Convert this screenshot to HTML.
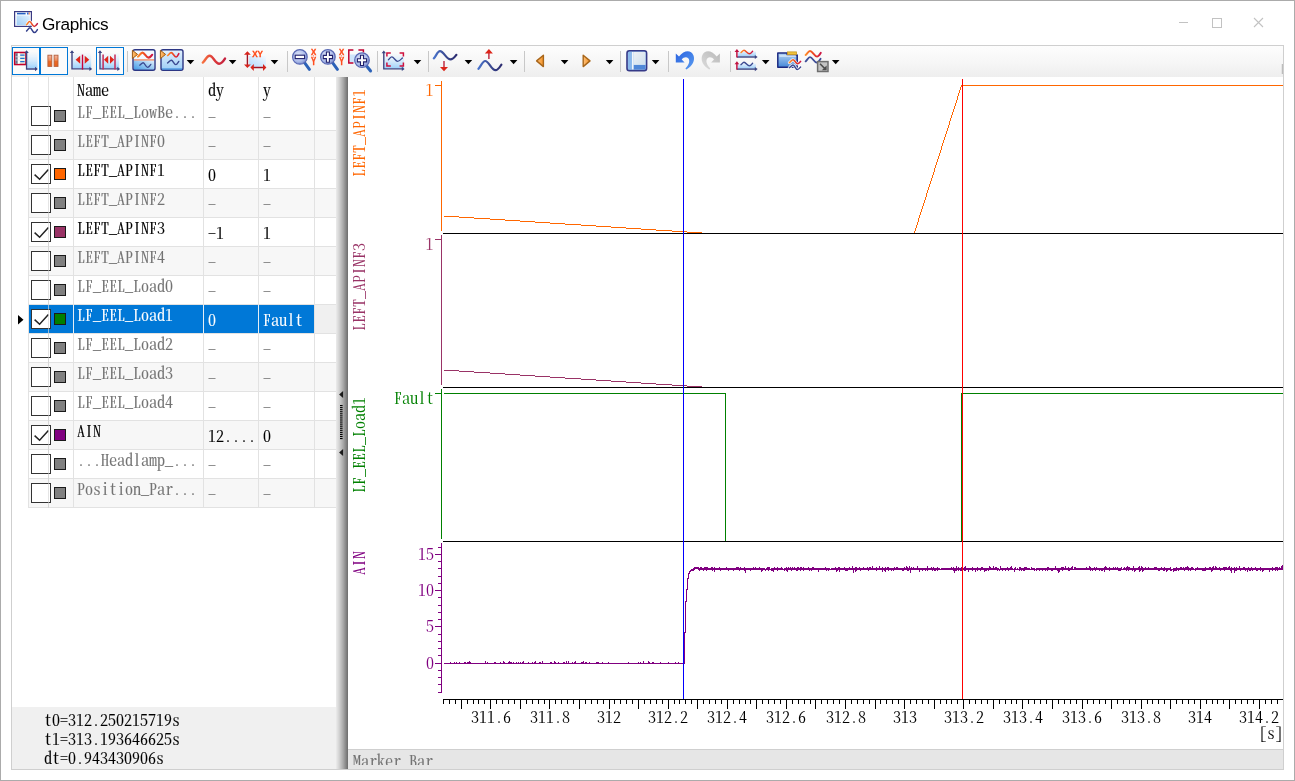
<!DOCTYPE html>
<html lang="en"><head><meta charset="utf-8"><title>Graphics</title>
<style>
*{box-sizing:border-box}
html,body{margin:0;padding:0}
body{width:1295px;height:781px;position:relative;overflow:hidden;background:#fff;font-family:"Noto Serif CJK SC","IPAGothic","Liberation Mono",monospace;font-size:16px;color:#000;font-feature-settings:"hwid"}
.abs{position:absolute}
.win{position:absolute;left:0;top:0;width:1295px;height:781px;border:1px solid #ababab;pointer-events:none}
.title{will-change:transform;position:absolute;left:42px;top:12px;font:17.2px/24px "Liberation Sans",sans-serif;letter-spacing:-.3px;color:#000;white-space:nowrap}
.frame{position:absolute;left:11px;top:45px;width:1273px;height:725px;border:1px solid #cfcfcf}
.toolbar{position:absolute;left:12px;top:46px;width:1271px;height:31px;background:linear-gradient(#fdfdfd,#f6f6f6 55%,#eeeeee)}
.tbtn{position:absolute;top:47px;width:28px;height:28px;border:1px solid #0078d7;background:#fbfbfb}
.sep{position:absolute;top:51px;width:1px;height:21px;background:#c8c8c8}
.tbl{will-change:transform;position:absolute;left:12px;top:77px;width:324px;height:630px;background:#fff;overflow:hidden}
.vl{position:absolute;top:0;width:1px;height:431px;background:#e2e2e2}
.hl{position:absolute;left:17px;width:307px;height:1px;background:#e2e2e2}
.alt{position:absolute;left:17px;width:307px;height:28px;background:#f7f7f7}
.t{position:absolute;height:16px;line-height:16px;white-space:pre;-webkit-text-stroke:.12px currentColor}
svg text{-webkit-text-stroke:.12px currentColor}
.tb text{-webkit-text-stroke:0}
.g{color:#737373}
.cb{position:absolute;left:19px;width:20px;height:20px;border:1px solid #333;background:#fff}
.sw{position:absolute;left:42px;width:12px;height:12px;border:1px solid #1a1a1a;background:#808080}
.status{will-change:transform;position:absolute;left:12px;top:707px;width:324px;height:62px;background:#f0f0f0}
.split{position:absolute;left:336px;top:77px;width:12px;height:692px;background:linear-gradient(to right,#ececec 0%,#d4d4d4 25%,#a8a8a8 60%,#6c6c6c 100%)}
.mbar{will-change:transform;position:absolute;left:348px;top:749px;width:935px;height:20px;background:#e6e6e6;border-top:1px solid #cfcfcf;overflow:hidden}
</style></head>
<body>
<svg class="abs" style="left:12px;top:8px" width="30" height="28" viewBox="12 8 30 28" fill="none">
<linearGradient id="gti" x1="1" y1="0" x2="0" y2="1"><stop offset="0" stop-color="#e4f2fd"/><stop offset="1" stop-color="#9cccf6"/></linearGradient>
<rect x="14.6" y="11.6" width="16.8" height="14.8" fill="#fff" stroke="#3a3a82" stroke-width="1.2"/>
<rect x="16.6" y="15.4" width="13.2" height="9.8" fill="url(#gti)"/>
<path d="M17 13.6H25.6" stroke="#2460c4" stroke-width="1.6"/><path d="M27 13.4H28.6" stroke="#2a6ad8" stroke-width="2"/><path d="M29.2 12.4V14.6" stroke="#f06020" stroke-width=".9"/>
<path d="M26.6 24.6C27.6 24 28.4 21.6 29.6 21.6C31.4 21.6 32.2 26.4 34.2 26.4C35.6 26.4 36.6 24.8 37.4 23.6" stroke="#fff" stroke-width="3" opacity=".9"/>
<linearGradient id="gor2" x1="0" y1="0" x2="1" y2="0"><stop offset="0" stop-color="#ff8c28"/><stop offset=".5" stop-color="#f04a20"/><stop offset="1" stop-color="#b81848"/></linearGradient>
<path d="M26.6 24.6C27.6 24 28.4 21.6 29.6 21.6C31.4 21.6 32.2 26.4 34.2 26.4C35.6 26.4 36.6 24.8 37.4 23.6" stroke="url(#gor2)" stroke-width="1.5" stroke-linecap="round"/>
<path d="M26.6 31C27.6 30.4 28.6 27.8 30 27.8C31.8 27.8 32.4 32.6 34.4 32.6C35.8 32.6 36.6 30.8 37.4 29.6" stroke="#34408c" stroke-width="1.5" stroke-linecap="round"/>
</svg>
<div class="title">Graphics</div>
<svg class="abs" style="left:1170px;top:10px" width="110" height="26" viewBox="0 0 110 26" shape-rendering="crispEdges" fill="none" stroke="#c2c2c2" stroke-width="1"><path d="M9 12.5H18"/><rect x="42.5" y="8.5" width="9" height="9"/><path d="M84 8L93 17M93 8L84 17" shape-rendering="auto" stroke-width="1.1"/></svg>
<div class="frame"></div>
<div class="toolbar"></div>
<div class="tbtn" style="left:12px"></div>
<div class="tbtn" style="left:40px"></div>
<div class="tbtn" style="left:96px"></div>
<div class="sep" style="left:127px"></div>
<div class="sep" style="left:287px"></div>
<div class="sep" style="left:377px"></div>
<div class="sep" style="left:428px"></div>
<div class="sep" style="left:524px"></div>
<div class="sep" style="left:620px"></div>
<div class="sep" style="left:668px"></div>
<div class="sep" style="left:730px"></div>
<svg class="abs tb" style="left:0;top:44px;will-change:transform" width="1295" height="34" viewBox="0 44 1295 34" fill="none">
<defs>
<linearGradient id="gb" x1="0" y1="0" x2="0" y2="1"><stop offset="0" stop-color="#d4eaff" stop-opacity=".05"/><stop offset=".5" stop-color="#c6e4fd" stop-opacity=".7"/><stop offset="1" stop-color="#9ad0fb"/></linearGradient>
<linearGradient id="gb2" x1="0" y1="0" x2="0" y2="1"><stop offset="0" stop-color="#e4f1fd"/><stop offset="1" stop-color="#9ccdf7"/></linearGradient>
<linearGradient id="gb3" x1="1" y1="0" x2="0" y2="1"><stop offset="0" stop-color="#e6f2fc"/><stop offset="1" stop-color="#3f9ae6"/></linearGradient>
<linearGradient id="gor" x1="0" y1="0" x2="1" y2="0"><stop offset="0" stop-color="#ff8c28"/><stop offset=".45" stop-color="#f04a20"/><stop offset="1" stop-color="#cc1444"/></linearGradient>
<linearGradient id="gsin" x1="0" y1="0" x2="1" y2="0"><stop offset="0" stop-color="#f6703e"/><stop offset=".5" stop-color="#dc3a3a"/><stop offset="1" stop-color="#c4203e"/></linearGradient>
<linearGradient id="gnv" x1="0" y1="0" x2="1" y2="0"><stop offset="0" stop-color="#4a74cc"/><stop offset=".5" stop-color="#3a4a92"/><stop offset="1" stop-color="#2c2c70"/></linearGradient>
<linearGradient id="gpa" x1="0" y1="0" x2="0" y2="1"><stop offset="0" stop-color="#f4b8a4"/><stop offset=".45" stop-color="#ee8a58"/><stop offset=".55" stop-color="#ea6a26"/><stop offset="1" stop-color="#e8601a"/></linearGradient>
<radialGradient id="gl" cx=".4" cy=".35" r=".75"><stop offset="0" stop-color="#dbe3f8"/><stop offset=".6" stop-color="#aebdea"/><stop offset="1" stop-color="#6378c4"/></radialGradient>
<linearGradient id="gtri" x1="0" y1="0" x2="1" y2="0"><stop offset="0" stop-color="#ffc078"/><stop offset="1" stop-color="#f59428"/></linearGradient>
<linearGradient id="gfold" x1="0" y1="0" x2="0" y2="1"><stop offset="0" stop-color="#b4d4f4"/><stop offset="1" stop-color="#4688d8"/></linearGradient>
<linearGradient id="gundo" x1="0" y1="0" x2="1" y2="1"><stop offset="0" stop-color="#2a62e0"/><stop offset="1" stop-color="#5a9cf0"/></linearGradient>
</defs>
<rect x="27.5" y="52" width="10" height="16.3" fill="url(#gb)"/>
<rect x="14.7" y="52.5" width="11.3" height="12" fill="#eef3e4" stroke="#c2002c" stroke-width="1.6"/>
<rect x="15.5" y="53.3" width="2.2" height="10.4" fill="#6a6f8c"/><rect x="17.9" y="53.3" width="1.8" height="10.4" fill="#fff"/>
<path d="M20.2 55.2H24.6M20.2 58.4H24.6M20.2 61.6H24.6" stroke="#1f6fd0" stroke-width="1.2"/>
<path d="M15.5 56.8H19.6M15.5 60H19.6" stroke="#d8dce6" stroke-width=".8"/>
<path d="M26.6 51.8V69H36.3" stroke="#3c4482" stroke-width="1.4"/>
<path d="M26.6 50.3l2.2 2.8h-4.4zM37.8 69l-2.8 -2.2v4.4z" fill="#3c4482"/>
<rect x="47.9" y="55.2" width="3.9" height="11.2" fill="url(#gpa)" stroke="#b5603c" stroke-width=".9"/>
<rect x="54.1" y="55.2" width="3.9" height="11.2" fill="url(#gpa)" stroke="#b5603c" stroke-width=".9"/>
<rect x="72.7" y="53" width="18.5" height="15.3" fill="url(#gb)"/>
<path d="M72 51.8V68.9H90.7" stroke="#3c4482" stroke-width="1.4"/>
<path d="M72 50.3l2.2 2.8h-4.4zM92.2 68.9l-2.8 -2.2v4.4z" fill="#3c4482"/>
<path d="M82.5 54.6V69.6" stroke="#cc0038" stroke-width="1.4"/>
<path d="M75.6 59.8l4.6 -4v8zM89.3 59.8l-4.6 -4v8z" fill="#e0261a"/>
<rect x="100.7" y="53" width="18.5" height="15.3" fill="url(#gb)"/>
<path d="M100 51.8V68.9H118.6" stroke="#3c4482" stroke-width="1.4"/>
<path d="M100 50.3l2.2 2.8h-4.4zM120.1 68.9l-2.8 -2.2v4.4z" fill="#3c4482"/>
<path d="M103.1 54.6V69.6M115 54.6V69.6" stroke="#c62a58" stroke-width="1.5"/>
<path d="M104 59.8l4.2 -4v8zM114.2 59.8l-4.2 -4v8z" fill="#e0261a"/>
<rect x="133" y="49.8" width="22" height="20.4" rx="2" fill="#f4f9ff"/>
<rect x="133.6" y="60.3" width="20.8" height="9.6" fill="url(#gb3)"/>
<path d="M133.6 59.9H154.4" stroke="#f08860" stroke-width="1.3"/>
<rect x="133" y="49.8" width="22" height="20.4" rx="2" stroke="#2c3684" stroke-width="1.4"/>
<path d="M138 56.6C139.5 56 140.6 52.6 142.4 52.6C144.6 52.6 146 57.8 148.6 57.6C150.2 57.5 151 56 152.2 54.8" stroke="url(#gor)" stroke-width="2.1" stroke-linecap="round"/>
<path d="M139.8 65.2C141 64.6 141.8 62.8 143.2 62.8C144.8 62.8 145.8 67.4 147.6 67.4C148.9 67.4 149.8 65.6 150.8 64.4" stroke="#3a4890" stroke-width="1.4" stroke-linecap="round"/>
<path d="M132.4 50.3L137.6 54.4L132.4 58.6Z" fill="url(#gtri)" stroke="#a0601a" stroke-width="1"/>
<rect x="161" y="49.8" width="22" height="20.4" rx="2" fill="url(#gb2)" stroke="#2c3684" stroke-width="1.4"/>
<path d="M162 69H182" stroke="#3f8fe0" stroke-width="1.2"/>
<path d="M167.6 55.4C168.8 55 169.6 52.6 171.2 52.6C173 52.6 174.2 57 176.2 57C177.4 57 178 55 178.8 53.6" stroke="url(#gor)" stroke-width="1.6" stroke-linecap="round"/>
<path d="M167.6 63C168.8 62.4 169.8 60.2 171.4 60.2C173 60.2 174 64.6 175.8 64.6C177 64.6 177.8 62.8 178.8 61.4" stroke="#3a4890" stroke-width="1.4" stroke-linecap="round"/>
<path d="M160.4 50.3L165.6 54.4L160.4 58.6Z" fill="url(#gtri)" stroke="#a0601a" stroke-width="1"/>
<path d="M202.8 62.6C205.2 60.8 206.6 55.8 209.6 55.8C213.2 55.8 215 63.8 219.2 63.8C222 63.8 223.6 60.8 225 58.6" stroke="url(#gsin)" stroke-width="2.4" stroke-linecap="round"/>
<linearGradient id="gxy" x1="1" y1="0" x2="0" y2="1"><stop offset="0" stop-color="#f4f9ff"/><stop offset="1" stop-color="#b4dafe"/></linearGradient>
<rect x="249" y="56" width="17" height="10.8" fill="url(#gxy)"/>
<path d="M247.4 53.5V66M252.6 67.5H264.4" stroke="#a01426" stroke-width="1.4"/>
<path d="M247.4 51.2l3.4 3.6h-6.8zM247.4 68l3.4 -3.4h-6.8zM250.4 67.5l3.4 -3.4v6.8zM266.4 67.5l-3.4 -3.4v6.8z" fill="#d8241c"/>
<text x="252.2" y="57.3" font-family="'Liberation Sans',sans-serif" font-weight="bold" font-size="9.6" fill="#ff4612" stroke="#ff4612" stroke-width=".3" textLength="10.8" lengthAdjust="spacingAndGlyphs">XY</text>
<path d="M304.5 62.699999999999996L309.4 69.4" stroke="#2c62b8" stroke-width="3" stroke-linecap="round"/>
<circle cx="299.9" cy="56.9" r="7.3" fill="url(#gl)" stroke="#5868b4" stroke-width="1.2"/>
<rect x="295.2" y="55.199999999999996" width="9.4" height="3.4" fill="#fff" stroke="#20206c" stroke-width="1.1"/>
<text font-family="'Liberation Sans',sans-serif" font-weight="bold" fill="#ff4a1a" stroke="#ff4a1a" stroke-width=".35"><tspan x="310.9" y="54.9" font-size="8.4" textLength="5.2" lengthAdjust="spacingAndGlyphs">X</tspan><tspan x="310.9" y="64.9" font-size="10.6" textLength="5.2" lengthAdjust="spacingAndGlyphs">Y</tspan></text>
<path d="M313.4 55.4V57.6" stroke="#ff4a1a" stroke-width="1" stroke-dasharray="1 .7"/>
<path d="M332.5 62.699999999999996L337.4 69.4" stroke="#2c62b8" stroke-width="3" stroke-linecap="round"/>
<circle cx="327.9" cy="56.9" r="7.3" fill="url(#gl)" stroke="#5868b4" stroke-width="1.2"/>
<path d="M323.29999999999995 55.4h3.1v-3.4h3v3.4h3.1v3.2h-3.1v3.6h-3v-3.6h-3.1z" fill="#fff" stroke="#20206c" stroke-width="1.1"/>
<text font-family="'Liberation Sans',sans-serif" font-weight="bold" fill="#ff4a1a" stroke="#ff4a1a" stroke-width=".35"><tspan x="338.9" y="54.9" font-size="8.4" textLength="5.2" lengthAdjust="spacingAndGlyphs">X</tspan><tspan x="338.9" y="64.9" font-size="10.6" textLength="5.2" lengthAdjust="spacingAndGlyphs">Y</tspan></text>
<path d="M341.4 55.4V57.6" stroke="#ff4a1a" stroke-width="1" stroke-dasharray="1 .7"/>
<rect x="350" y="54.5" width="8" height="8" fill="#cfe6fb"/>
<path d="M353.4 50H348.8V63H353.4M358.4 50H363.4V52.6" stroke="#c00030" stroke-width="1.5"/>
<path d="M366.6 66.0L370.6 71" stroke="#2c62b8" stroke-width="3" stroke-linecap="round"/>
<circle cx="362" cy="60.2" r="7.3" fill="url(#gl)" stroke="#5868b4" stroke-width="1.2"/>
<path d="M357.4 58.7h3.1v-3.4h3v3.4h3.1v3.2h-3.1v3.6h-3v-3.6h-3.1z" fill="#fff" stroke="#20206c" stroke-width="1.1"/>
<rect x="384.6" y="54" width="19.4" height="14.4" fill="url(#gb)"/>
<path d="M383.8 51.9V68.9H403.1" stroke="#3c4482" stroke-width="1.4"/>
<path d="M383.8 50.4l2.2 2.8h-4.4zM404.6 68.9l-2.8 -2.2v4.4z" fill="#3c4482"/>
<path d="M386.9 56.6V52.9H390.8M399.6 52.9H403.4V56.6M386.9 62.4V66H390.8M399.6 66H403.4V62.4" stroke="#d0103c" stroke-width="1.5"/>
<path d="M388.4 59.8C389.6 59 390.4 56.8 391.8 56.8C393.8 56.8 395.4 61.4 397.6 61.4C399.4 61.4 401 59.4 402.4 58" stroke="#3a4890" stroke-width="1.3" stroke-linecap="round"/>
<path d="M433.8 58.4C436 56.6 437.2 51.2 440 51.2C443.6 51.2 446.4 59.4 450.4 59.4C453 59.4 455 56.6 456.4 54.8" stroke="url(#gnv)" stroke-width="2.2" stroke-linecap="round"/>
<path d="M444 61V68" stroke="#c03044" stroke-width="1.5"/><path d="M444 71.3l-4 -4.4h8z" fill="#dc2418"/>
<path d="M478.4 68.8C480.6 67 482.4 61 485.2 61C488.8 61 491.4 70.2 495.4 70.2C498 70.2 500 66.8 501.4 64.6" stroke="url(#gnv)" stroke-width="2.2" stroke-linecap="round"/>
<path d="M488.9 52.4V59" stroke="#c03044" stroke-width="1.5"/><path d="M488.9 49l-4 4.4h8z" fill="#dc2418"/>
<path d="M536.6 60.9L543.4 55.2V66.6Z" fill="url(#gtri)" stroke="#a8661a" stroke-width="1.4" stroke-linejoin="round"/>
<path d="M590 60.9L583.2 55.2V66.6Z" fill="url(#gtri)" stroke="#a8661a" stroke-width="1.4" stroke-linejoin="round"/>
<rect x="627" y="50.8" width="19.6" height="19.8" rx="2.4" fill="#9cc4f0" stroke="#363a88" stroke-width="1.6"/>
<rect x="628.2" y="52" width="3.6" height="17.4" fill="#8ab8ec"/><rect x="632" y="52" width="1.6" height="17.4" fill="#f2f6fb"/>
<linearGradient id="gly" x1="0" y1="0" x2="1" y2="1"><stop offset="0" stop-color="#eef1f4"/><stop offset="1" stop-color="#cfe0ee"/></linearGradient>
<rect x="633.8" y="52" width="11.6" height="12.8" fill="url(#gly)"/><rect x="633.8" y="65" width="11.6" height="4.4" fill="#5088d8"/>
<g transform="translate(675.8 0)"><path d="M0 53.4V62.4H8.8L5.9 59.5C7.6 57.2 10.6 56.4 12.4 58.2C14.4 60.2 13.6 64.6 9.6 68.4L10.6 69.4C16.8 66 19.6 60 17.6 55.2C15.4 50 8.6 49.4 3.2 56.6Z" fill="url(#gundo)"/></g>
<linearGradient id="gredo" x1="0" y1="0" x2="1" y2="1"><stop offset="0" stop-color="#b8b8b8"/><stop offset="1" stop-color="#dcdcdc"/></linearGradient>
<g transform="translate(719.9 0) scale(-1 1)"><path d="M0 53.4V62.4H8.8L5.9 59.5C7.6 57.2 10.6 56.4 12.4 58.2C14.4 60.2 13.6 64.6 9.6 68.4L10.6 69.4C16.8 66 19.6 60 17.6 55.2C15.4 50 8.6 49.4 3.2 56.6Z" fill="url(#gredo)"/></g>
<rect x="738" y="51.6" width="18" height="5" fill="url(#gb2)"/>
<path d="M737 57H755.6" stroke="#3c4482" stroke-width="1.4"/><path d="M757.6 57l-2.8 -2.1v4.2z" fill="#3c4482"/>
<path d="M736.9 51.4V57.6" stroke="#c01040" stroke-width="1.5"/><path d="M736.9 49.1l2.3 3h-4.6z" fill="#c01040"/>
<path d="M741 52.6C742 52 742.8 50.2 744 50.2C745.8 50.2 747.4 53.8 749.4 53.8C750.8 53.8 751.6 52.4 752.6 51.2" stroke="url(#gor)" stroke-width="1.4" stroke-linecap="round"/>
<rect x="738" y="63.7" width="18" height="5" fill="url(#gb2)"/>
<path d="M737 69.1H755.6" stroke="#3c4482" stroke-width="1.4"/><path d="M757.6 69.1l-2.8 -2.1v4.2z" fill="#3c4482"/>
<path d="M736.9 63.5V69.7" stroke="#c01040" stroke-width="1.5"/><path d="M736.9 61.2l2.3 3h-4.6z" fill="#c01040"/>
<path d="M741 64.7C742 64.1 742.8 62.300000000000004 744 62.300000000000004C745.8 62.300000000000004 747.4 65.89999999999999 749.4 65.89999999999999C750.8 65.89999999999999 751.6 64.5 752.6 63.300000000000004" stroke="#3a4890" stroke-width="1.4" stroke-linecap="round"/>
<path d="M777.8 52.9H787.2V55H797.2V67.2H777.8Z" fill="url(#gfold)" stroke="#1c2a82" stroke-width="1.5" stroke-linejoin="round"/>
<rect x="787.4" y="51.9" width="9" height="2.8" fill="#f0c23c" stroke="#c8961c" stroke-width=".8"/>
<path d="M779.4 56H795.8" stroke="#e8f2fc" stroke-width="1.2"/>
<path d="M789.4 62.6C790.6 62 791.6 59.8 793 59.8C794.8 59.8 795.8 63.8 797.6 63.8C798.8 63.8 799.6 62.6 800.6 61.4" stroke="#fff" stroke-width="3.2" stroke-linecap="round" opacity=".85"/>
<path d="M789.4 67.6C790.6 67 791.6 65 793 65C794.8 65 795.6 69.6 797.4 69.6C798.6 69.6 799.6 68.2 800.6 67" stroke="#fff" stroke-width="3.2" stroke-linecap="round" opacity=".85"/>
<path d="M789.4 62.6C790.6 62 791.6 59.8 793 59.8C794.8 59.8 795.8 63.8 797.6 63.8C798.8 63.8 799.6 62.6 800.6 61.4" stroke="url(#gor)" stroke-width="1.6" stroke-linecap="round"/>
<path d="M789.4 67.6C790.6 67 791.6 65 793 65C794.8 65 795.6 69.6 797.4 69.6C798.6 69.6 799.6 68.2 800.6 67" stroke="#3a4890" stroke-width="1.5" stroke-linecap="round"/>
<path d="M805.6 55C807 54 808.2 51 810 51C812.4 51 814.4 56.6 817 56.6C818.6 56.6 819.8 54.4 820.8 52.8" stroke="url(#gor)" stroke-width="1.9" stroke-linecap="round"/>
<path d="M805.6 61.4C807 60.4 808.2 57.2 810 57.2C812.4 57.2 814 62.4 816.6 62.6C818.2 62.6 819.6 60.6 820.6 58.8" stroke="#3f4e98" stroke-width="1.8" stroke-linecap="round"/>
<rect x="817.6" y="61.6" width="10.4" height="9.9" fill="#c4c4c4" stroke="#6e6e6e" stroke-width="1.5"/>
<path d="M820 63.8L824.6 68.4" stroke="#4c4c4c" stroke-width="1.5"/><path d="M826.6 65.4V70.2H821.8Z" fill="#4c4c4c"/>
<path d="M186.7 59.9h7.6l-3.8 4.3z" fill="#000"/>
<path d="M228.79999999999998 59.9h7.6l-3.8 4.3z" fill="#000"/>
<path d="M270.7 59.9h7.6l-3.8 4.3z" fill="#000"/>
<path d="M413.7 59.9h7.6l-3.8 4.3z" fill="#000"/>
<path d="M464.59999999999997 59.9h7.6l-3.8 4.3z" fill="#000"/>
<path d="M509.8 59.9h7.6l-3.8 4.3z" fill="#000"/>
<path d="M560.8000000000001 59.9h7.6l-3.8 4.3z" fill="#000"/>
<path d="M605.8000000000001 59.9h7.6l-3.8 4.3z" fill="#000"/>
<path d="M651.8000000000001 59.9h7.6l-3.8 4.3z" fill="#000"/>
<path d="M761.9000000000001 59.9h7.6l-3.8 4.3z" fill="#000"/>
<path d="M831.9000000000001 59.9h7.6l-3.8 4.3z" fill="#000"/>
<path d="M1282.3 64V74" stroke="#b0b0b0" stroke-width="1"/>
</svg>
<div class="tbl">
<div class="hl" style="top:53px"></div>
<div class="alt" style="top:54px"></div>
<div class="hl" style="top:82px"></div>
<div class="hl" style="top:111px"></div>
<div class="alt" style="top:112px"></div>
<div class="hl" style="top:140px"></div>
<div class="hl" style="top:169px"></div>
<div class="alt" style="top:170px"></div>
<div class="hl" style="top:198px"></div>
<div class="hl" style="top:227px"></div>
<div class="abs" style="left:17px;top:228px;width:285px;height:28px;background:#0078d7"></div>
<div class="abs" style="left:303px;top:228px;width:21px;height:28px;background:#f0f0f0"></div>
<div class="hl" style="top:256px"></div>
<div class="hl" style="top:285px"></div>
<div class="alt" style="top:286px"></div>
<div class="hl" style="top:314px"></div>
<div class="hl" style="top:343px"></div>
<div class="alt" style="top:344px"></div>
<div class="hl" style="top:372px"></div>
<div class="hl" style="top:401px"></div>
<div class="alt" style="top:402px"></div>
<div class="hl" style="top:430px"></div>
<div class="vl" style="left:16px"></div>
<div class="vl" style="left:36px"></div>
<div class="vl" style="left:61px"></div>
<div class="vl" style="left:191px"></div>
<div class="vl" style="left:246px"></div>
<div class="vl" style="left:302px"></div>
<div class="abs" style="left:36px;top:228px;width:1px;height:28px;background:#5aa5e3"></div>
<div class="abs" style="left:61px;top:228px;width:1px;height:28px;background:#e6eef5"></div>
<div class="abs" style="left:191px;top:228px;width:1px;height:28px;background:#e6eef5"></div>
<div class="abs" style="left:246px;top:228px;width:1px;height:28px;background:#e6eef5"></div>
<div class="t" style="left:65px;top:5px">Name</div>
<div class="t" style="left:196px;top:5px">dy</div>
<div class="t" style="left:251px;top:5px">y</div>
<div class="cb" style="top:29px"></div>
<div class="sw" style="top:33px;background:#808080"></div>
<div class="t g" style="left:65px;top:27px">LF_EEL_LowBe...</div>
<div class="t g" style="left:196px;top:32px">-</div>
<div class="t g" style="left:251px;top:32px">-</div>
<div class="cb" style="top:58px"></div>
<div class="sw" style="top:62px;background:#808080"></div>
<div class="t g" style="left:65px;top:56px">LEFT_APINF0</div>
<div class="t g" style="left:196px;top:61px">-</div>
<div class="t g" style="left:251px;top:61px">-</div>
<div class="cb" style="top:87px"><svg width="18" height="18" viewBox="0 0 18 18" style="display:block"><path d="M2.6 9.6L7.6 14.2L16.4 4.6" fill="none" stroke="#222" stroke-width="1.5"/></svg></div>
<div class="sw" style="top:91px;background:#ff6600"></div>
<div class="t" style="left:65px;top:85px">LEFT_APINF1</div>
<div class="t" style="left:196px;top:90px">0</div>
<div class="t" style="left:251px;top:90px">1</div>
<div class="cb" style="top:116px"></div>
<div class="sw" style="top:120px;background:#808080"></div>
<div class="t g" style="left:65px;top:114px">LEFT_APINF2</div>
<div class="t g" style="left:196px;top:119px">-</div>
<div class="t g" style="left:251px;top:119px">-</div>
<div class="cb" style="top:145px"><svg width="18" height="18" viewBox="0 0 18 18" style="display:block"><path d="M2.6 9.6L7.6 14.2L16.4 4.6" fill="none" stroke="#222" stroke-width="1.5"/></svg></div>
<div class="sw" style="top:149px;background:#993366"></div>
<div class="t" style="left:65px;top:143px">LEFT_APINF3</div>
<div class="t" style="left:196px;top:148px">-1</div>
<div class="t" style="left:251px;top:148px">1</div>
<div class="cb" style="top:174px"></div>
<div class="sw" style="top:178px;background:#808080"></div>
<div class="t g" style="left:65px;top:172px">LEFT_APINF4</div>
<div class="t g" style="left:196px;top:177px">-</div>
<div class="t g" style="left:251px;top:177px">-</div>
<div class="cb" style="top:203px"></div>
<div class="sw" style="top:207px;background:#808080"></div>
<div class="t g" style="left:65px;top:201px">LF_EEL_Load0</div>
<div class="t g" style="left:196px;top:206px">-</div>
<div class="t g" style="left:251px;top:206px">-</div>
<div class="cb" style="top:232px"><svg width="18" height="18" viewBox="0 0 18 18" style="display:block"><path d="M2.6 9.6L7.6 14.2L16.4 4.6" fill="none" stroke="#222" stroke-width="1.5"/></svg></div>
<div class="sw" style="top:236px;background:#008000"></div>
<div class="t" style="left:65px;top:230px;color:#fff">LF_EEL_Load1</div>
<div class="t" style="left:196px;top:235px;color:#fff">0</div>
<div class="t" style="left:251px;top:235px;color:#fff">Fault</div>
<div class="cb" style="top:261px"></div>
<div class="sw" style="top:265px;background:#808080"></div>
<div class="t g" style="left:65px;top:259px">LF_EEL_Load2</div>
<div class="t g" style="left:196px;top:264px">-</div>
<div class="t g" style="left:251px;top:264px">-</div>
<div class="cb" style="top:290px"></div>
<div class="sw" style="top:294px;background:#808080"></div>
<div class="t g" style="left:65px;top:288px">LF_EEL_Load3</div>
<div class="t g" style="left:196px;top:293px">-</div>
<div class="t g" style="left:251px;top:293px">-</div>
<div class="cb" style="top:319px"></div>
<div class="sw" style="top:323px;background:#808080"></div>
<div class="t g" style="left:65px;top:317px">LF_EEL_Load4</div>
<div class="t g" style="left:196px;top:322px">-</div>
<div class="t g" style="left:251px;top:322px">-</div>
<div class="cb" style="top:348px"><svg width="18" height="18" viewBox="0 0 18 18" style="display:block"><path d="M2.6 9.6L7.6 14.2L16.4 4.6" fill="none" stroke="#222" stroke-width="1.5"/></svg></div>
<div class="sw" style="top:352px;background:#800080"></div>
<div class="t" style="left:65px;top:346px">AIN</div>
<div class="t" style="left:196px;top:351px">12....</div>
<div class="t" style="left:251px;top:351px">0</div>
<div class="cb" style="top:377px"></div>
<div class="sw" style="top:381px;background:#808080"></div>
<div class="t g" style="left:65px;top:375px">...Headlamp_...</div>
<div class="t g" style="left:196px;top:380px">-</div>
<div class="t g" style="left:251px;top:380px">-</div>
<div class="cb" style="top:406px"></div>
<div class="sw" style="top:410px;background:#808080"></div>
<div class="t g" style="left:65px;top:404px">Position_Par...</div>
<div class="t g" style="left:196px;top:409px">-</div>
<div class="t g" style="left:251px;top:409px">-</div>
<div class="abs" style="left:36px;top:25px;width:1px;height:406px;background:rgba(205,205,205,.55)"></div>
<svg class="abs" style="left:6px;top:238px" width="6" height="10" viewBox="0 0 6 10"><path d="M0 0L5.5 4.75L0 9.5Z" fill="#000"/></svg>
</div>
<div class="status">
<div class="t" style="left:32px;top:5px">t0=312.250215719s</div>
<div class="t" style="left:32px;top:24px">t1=313.193646625s</div>
<div class="t" style="left:32px;top:43px">dt=0.943430906s</div>
</div>
<div class="split">
<svg width="12" height="692" viewBox="0 0 12 692" style="display:block"><path d="M7.1 313.9L3.1 317.5L7.1 321.1Z" fill="#1a1a1a"/><path d="M7.1 371.9L3.1 375.5L7.1 379.1Z" fill="#1a1a1a"/><rect x="4" y="328" width="2.6" height="1.15" fill="#000"/><rect x="4" y="330.06" width="2.6" height="1.15" fill="#000"/><rect x="4" y="332.12" width="2.6" height="1.15" fill="#000"/><rect x="4" y="334.18" width="2.6" height="1.15" fill="#000"/><rect x="4" y="336.24" width="2.6" height="1.15" fill="#000"/><rect x="4" y="338.3" width="2.6" height="1.15" fill="#000"/><rect x="4" y="340.36" width="2.6" height="1.15" fill="#000"/><rect x="4" y="342.42" width="2.6" height="1.15" fill="#000"/><rect x="4" y="344.48" width="2.6" height="1.15" fill="#000"/><rect x="4" y="346.54" width="2.6" height="1.15" fill="#000"/><rect x="4" y="348.6" width="2.6" height="1.15" fill="#000"/><rect x="4" y="350.66" width="2.6" height="1.15" fill="#000"/><rect x="4" y="352.72" width="2.6" height="1.15" fill="#000"/><rect x="4" y="354.78000000000003" width="2.6" height="1.15" fill="#000"/><rect x="4" y="356.84000000000003" width="2.6" height="1.15" fill="#000"/><rect x="4" y="358.90000000000003" width="2.6" height="1.15" fill="#000"/><rect x="4" y="360.96000000000004" width="2.6" height="1.15" fill="#000"/></svg>
</div>
<svg class="abs" style="left:348px;top:77px;will-change:transform" width="935" height="672" viewBox="0 0 935 672" font-family="'Noto Serif CJK SC',IPAGothic,'Liberation Mono',monospace" font-size="16">
<rect width="935" height="672" fill="#fff"/>
<g shape-rendering="crispEdges" fill="none" stroke-width="1">
<path d="M95 156.5H935" stroke="#000"/>
<path d="M95 310.5H935" stroke="#000"/>
<path d="M95 464.5H935" stroke="#000"/>
<path d="M93.5 4V154" stroke="#ff6600"/>
<path d="M93.5 158V308" stroke="#993366"/>
<path d="M93.5 312V462" stroke="#008000"/>
<path d="M93.5 466V616" stroke="#800080"/>
<path d="M87 8.5H93" stroke="#ff6600"/>
<path d="M87 162.5H93" stroke="#993366"/>
<path d="M87 316.5H93" stroke="#008000"/>
<path d="M90 615.5H93M90 607.5H93M90 600.5H93M90 593.5H93M87 586.5H93M90 578.5H93M90 571.5H93M90 564.5H93M90 557.5H93M87 549.5H93M90 542.5H93M90 535.5H93M90 528.5H93M90 520.5H93M87 513.5H93M90 506.5H93M90 499.5H93M90 491.5H93M90 484.5H93M87 477.5H93M90 470.5H93" stroke="#800080"/>
<path d="M95 622.5H935" stroke="#000"/>
<path d="M95.5 622v5M101.5 622v5M107.5 622v5M113.5 622v10M119.5 622v5M125.5 622v5M130.5 622v5M136.5 622v5M142.5 622v10M148.5 622v5M154.5 622v5M160.5 622v5M166.5 622v5M172.5 622v10M178.5 622v5M184.5 622v5M190.5 622v5M196.5 622v5M201.5 622v10M207.5 622v5M213.5 622v5M219.5 622v5M225.5 622v5M231.5 622v10M237.5 622v5M243.5 622v5M249.5 622v5M255.5 622v5M261.5 622v10M266.5 622v5M272.5 622v5M278.5 622v5M284.5 622v5M290.5 622v10M296.5 622v5M302.5 622v5M308.5 622v5M314.5 622v5M320.5 622v10M326.5 622v5M331.5 622v5M337.5 622v5M343.5 622v5M349.5 622v10M355.5 622v5M361.5 622v5M367.5 622v5M373.5 622v5M379.5 622v10M385.5 622v5M391.5 622v5M397.5 622v5M402.5 622v5M408.5 622v10M414.5 622v5M420.5 622v5M426.5 622v5M432.5 622v5M438.5 622v10M444.5 622v5M450.5 622v5M456.5 622v5M462.5 622v5M467.5 622v10M473.5 622v5M479.5 622v5M485.5 622v5M491.5 622v5M497.5 622v10M503.5 622v5M509.5 622v5M515.5 622v5M521.5 622v5M527.5 622v10M532.5 622v5M538.5 622v5M544.5 622v5M550.5 622v5M556.5 622v10M562.5 622v5M568.5 622v5M574.5 622v5M580.5 622v5M586.5 622v10M592.5 622v5M598.5 622v5M603.5 622v5M609.5 622v5M615.5 622v10M621.5 622v5M627.5 622v5M633.5 622v5M639.5 622v5M645.5 622v10M651.5 622v5M657.5 622v5M663.5 622v5M668.5 622v5M674.5 622v10M680.5 622v5M686.5 622v5M692.5 622v5M698.5 622v5M704.5 622v10M710.5 622v5M716.5 622v5M722.5 622v5M728.5 622v5M734.5 622v10M739.5 622v5M745.5 622v5M751.5 622v5M757.5 622v5M763.5 622v10M769.5 622v5M775.5 622v5M781.5 622v5M787.5 622v5M793.5 622v10M799.5 622v5M804.5 622v5M810.5 622v5M816.5 622v5M822.5 622v10M828.5 622v5M834.5 622v5M840.5 622v5M846.5 622v5M852.5 622v10M858.5 622v5M864.5 622v5M869.5 622v5M875.5 622v5M881.5 622v10M887.5 622v5M893.5 622v5M899.5 622v5M905.5 622v5M911.5 622v10M917.5 622v5M923.5 622v5M929.5 622v5" stroke="#000"/>
<path d="M96 139.5H111M111 140.5H126M126 141.5H142M142 142.5H157M157 143.5H172M172 144.5H187M187 145.5H202M202 146.5H217M217 147.5H233M233 148.5H248M248 149.5H263M263 150.5H278M278 151.5H293M293 152.5H308M308 153.5H324M324 154.5H339M339 155.5H354" stroke="#ff6600"/>
<path d="M96 293.5H111M111 294.5H126M126 295.5H142M142 296.5H157M157 297.5H172M172 298.5H187M187 299.5H202M202 300.5H217M217 301.5H233M233 302.5H248M248 303.5H263M263 304.5H278M278 305.5H293M293 306.5H308M308 307.5H324M324 308.5H339M339 309.5H354" stroke="#993366"/>
<path d="M613 8.5h1M613 9.5h1M612 10.5h1M612 11.5h1M612 12.5h1M611 13.5h1M611 14.5h1M611 15.5h1M610 16.5h1M610 17.5h1M610 18.5h1M609 19.5h1M609 20.5h1M609 21.5h1M609 22.5h1M608 23.5h1M608 24.5h1M608 25.5h1M607 26.5h1M607 27.5h1M607 28.5h1M606 29.5h1M606 30.5h1M606 31.5h1M605 32.5h1M605 33.5h1M605 34.5h1M604 35.5h1M604 36.5h1M604 37.5h1M603 38.5h1M603 39.5h1M603 40.5h1M602 41.5h1M602 42.5h1M602 43.5h1M601 44.5h1M601 45.5h1M601 46.5h1M601 47.5h1M600 48.5h1M600 49.5h1M600 50.5h1M599 51.5h1M599 52.5h1M599 53.5h1M598 54.5h1M598 55.5h1M598 56.5h1M597 57.5h1M597 58.5h1M597 59.5h1M596 60.5h1M596 61.5h1M596 62.5h1M595 63.5h1M595 64.5h1M595 65.5h1M594 66.5h1M594 67.5h1M594 68.5h1M593 69.5h1M593 70.5h1M593 71.5h1M593 72.5h1M592 73.5h1M592 74.5h1M592 75.5h1M591 76.5h1M591 77.5h1M591 78.5h1M590 79.5h1M590 80.5h1M590 81.5h1M589 82.5h1M589 83.5h1M589 84.5h1M588 85.5h1M588 86.5h1M588 87.5h1M587 88.5h1M587 89.5h1M587 90.5h1M586 91.5h1M586 92.5h1M586 93.5h1M586 94.5h1M585 95.5h1M585 96.5h1M585 97.5h1M584 98.5h1M584 99.5h1M584 100.5h1M583 101.5h1M583 102.5h1M583 103.5h1M582 104.5h1M582 105.5h1M582 106.5h1M581 107.5h1M581 108.5h1M581 109.5h1M580 110.5h1M580 111.5h1M580 112.5h1M579 113.5h1M579 114.5h1M579 115.5h1M578 116.5h1M578 117.5h1M578 118.5h1M578 119.5h1M577 120.5h1M577 121.5h1M577 122.5h1M576 123.5h1M576 124.5h1M576 125.5h1M575 126.5h1M575 127.5h1M575 128.5h1M574 129.5h1M574 130.5h1M574 131.5h1M573 132.5h1M573 133.5h1M573 134.5h1M572 135.5h1M572 136.5h1M572 137.5h1M571 138.5h1M571 139.5h1M571 140.5h1M570 141.5h1M570 142.5h1M570 143.5h1M570 144.5h1M569 145.5h1M569 146.5h1M569 147.5h1M568 148.5h1M568 149.5h1M568 150.5h1M567 151.5h1M567 152.5h1M567 153.5h1M566 154.5h1M566 155.5h1" stroke="#ff6600"/>
<path d="M613 8.5H935" stroke="#ff6600"/>
<path d="M96 316.5H378" stroke="#008000"/>
<path d="M377.5 316V464" stroke="#008000"/>
<path d="M613.5 316V464" stroke="#008000"/>
<path d="M613 316.5H935" stroke="#008000"/>
<path d="M96.5 586V587M97.5 586V587M98.5 586V587M99.5 586V587M100.5 586V587M101.5 586V587M102.5 585V587M103.5 586V587M104.5 586V587M105.5 586V587M106.5 585V587M107.5 586V587M108.5 585V587M109.5 586V587M110.5 586V587M111.5 585V587M112.5 586V587M113.5 586V587M114.5 586V587M115.5 586V587M116.5 585V587M117.5 585V587M118.5 586V587M119.5 585V587M120.5 585V587M121.5 584V587M122.5 585V587M123.5 586V587M124.5 586V587M125.5 586V587M126.5 586V587M127.5 586V587M128.5 586V587M129.5 586V587M130.5 586V587M131.5 586V587M132.5 586V587M133.5 586V587M134.5 586V587M135.5 586V587M136.5 586V587M137.5 584V587M138.5 586V587M139.5 585V587M140.5 586V587M141.5 586V587M142.5 586V587M143.5 586V587M144.5 586V587M145.5 586V587M146.5 585V587M147.5 585V587M148.5 586V587M149.5 586V587M150.5 586V587M151.5 586V587M152.5 585V587M153.5 586V587M154.5 586V587M155.5 584V587M156.5 585V587M157.5 586V587M158.5 586V587M159.5 586V587M160.5 585V587M161.5 584V587M162.5 585V587M163.5 585V587M164.5 586V587M165.5 585V587M166.5 586V587M167.5 586V587M168.5 585V587M169.5 586V587M170.5 585V587M171.5 586V587M172.5 585V587M173.5 586V587M174.5 585V587M175.5 584V587M176.5 586V587M177.5 586V587M178.5 586V587M179.5 586V587M180.5 585V587M181.5 586V587M182.5 586V587M183.5 586V587M184.5 585V587M185.5 586V587M186.5 585V587M187.5 584V587M188.5 586V587M189.5 586V587M190.5 586V587M191.5 585V587M192.5 585V587M193.5 586V587M194.5 584V587M195.5 586V587M196.5 586V587M197.5 586V587M198.5 586V587M199.5 586V587M200.5 586V587M201.5 586V587M202.5 585V587M203.5 585V587M204.5 586V587M205.5 586V587M206.5 584V587M207.5 585V587M208.5 586V587M209.5 586V587M210.5 585V587M211.5 586V587M212.5 586V587M213.5 586V587M214.5 586V587M215.5 585V587M216.5 585V587M217.5 586V587M218.5 584V587M219.5 586V587M220.5 584V587M221.5 586V587M222.5 586V587M223.5 586V587M224.5 585V587M225.5 586V587M226.5 585V587M227.5 584V587M228.5 586V587M229.5 586V587M230.5 586V587M231.5 586V587M232.5 586V587M233.5 585V587M234.5 585V587M235.5 584V587M236.5 586V587M237.5 585V587M238.5 585V587M239.5 586V587M240.5 586V587M241.5 585V587M242.5 586V587M243.5 586V587M244.5 586V587M245.5 586V587M246.5 586V587M247.5 586V587M248.5 585V587M249.5 585V587M250.5 585V587M251.5 586V587M252.5 586V587M253.5 586V587M254.5 585V587M255.5 586V587M256.5 586V587M257.5 586V587M258.5 586V587M259.5 586V587M260.5 585V587M261.5 586V587M262.5 586V587M263.5 586V587M264.5 586V587M265.5 586V587M266.5 586V587M267.5 586V587M268.5 586V587M269.5 586V587M270.5 586V587M271.5 586V587M272.5 586V587M273.5 586V587M274.5 586V587M275.5 586V587M276.5 586V587M277.5 586V587M278.5 586V587M279.5 586V587M280.5 585V587M281.5 586V587M282.5 586V587M283.5 586V587M284.5 586V587M285.5 586V587M286.5 586V587M287.5 586V587M288.5 586V587M289.5 586V587M290.5 585V587M291.5 586V587M292.5 585V587M293.5 586V587M294.5 586V587M295.5 584V587M296.5 586V587M297.5 586V587M298.5 586V587M299.5 586V587M300.5 584V587M301.5 585V587M302.5 586V587M303.5 586V587M304.5 585V587M305.5 585V587M306.5 586V587M307.5 586V587M308.5 586V587M309.5 586V587M310.5 586V587M311.5 586V587M312.5 585V587M313.5 586V587M314.5 586V587M315.5 586V587M316.5 586V587M317.5 586V587M318.5 586V587M319.5 586V587M320.5 585V587M321.5 586V587M322.5 586V587M323.5 586V587M324.5 586V587M325.5 586V587M326.5 586V587M327.5 585V587M328.5 586V587M329.5 586V587M330.5 585V587M331.5 586V587M332.5 586V587M333.5 586V587M334.5 586V587M335.5 586V587M336.5 555V587M337.5 524V556M338.5 512V525M339.5 501V513M340.5 496V502M341.5 494V497M342.5 493V495M343.5 492V494M344.5 492V494M345.5 491V494M346.5 490V493M347.5 490V492M348.5 490V492M349.5 490V492M350.5 490V493M351.5 491V494M352.5 490V493M353.5 490V493M354.5 491V493M355.5 491V494M356.5 490V493M357.5 490V493M358.5 490V494M359.5 490V493M360.5 491V493M361.5 491V493M362.5 491V493M363.5 490V493M364.5 490V494M365.5 491V493M366.5 490V495M367.5 491V493M368.5 491V493M369.5 491V493M370.5 491V493M371.5 490V493M372.5 491V494M373.5 491V493M374.5 491V493M375.5 491V493M376.5 491V493M377.5 491V493M378.5 490V493M379.5 491V493M380.5 491V494M381.5 491V493M382.5 491V493M383.5 491V493M384.5 491V493M385.5 491V494M386.5 491V493M387.5 491V493M388.5 490V493M389.5 490V493M390.5 490V493M391.5 491V494M392.5 490V493M393.5 491V493M394.5 491V493M395.5 491V493M396.5 490V494M397.5 491V496M398.5 491V493M399.5 491V493M400.5 491V493M401.5 491V493M402.5 491V494M403.5 491V493M404.5 491V493M405.5 490V493M406.5 491V493M407.5 490V493M408.5 491V493M409.5 491V493M410.5 491V493M411.5 490V493M412.5 491V493M413.5 491V495M414.5 491V494M415.5 491V493M416.5 491V493M417.5 492V494M418.5 491V493M419.5 490V493M420.5 490V494M421.5 490V493M422.5 492V493M423.5 491V494M424.5 491V494M425.5 491V495M426.5 490V493M427.5 491V493M428.5 491V493M429.5 490V494M430.5 491V493M431.5 491V493M432.5 491V493M433.5 490V493M434.5 491V493M435.5 492V493M436.5 491V494M437.5 491V493M438.5 490V494M439.5 491V495M440.5 490V493M441.5 491V493M442.5 490V493M443.5 491V494M444.5 490V493M445.5 491V493M446.5 490V493M447.5 491V493M448.5 491V494M449.5 490V494M450.5 490V493M451.5 491V493M452.5 490V494M453.5 490V493M454.5 491V493M455.5 490V494M456.5 491V493M457.5 491V493M458.5 491V493M459.5 491V493M460.5 490V493M461.5 491V494M462.5 491V493M463.5 491V494M464.5 490V493M465.5 490V493M466.5 491V493M467.5 491V493M468.5 491V493M469.5 491V493M470.5 491V495M471.5 491V493M472.5 491V493M473.5 491V493M474.5 491V493M475.5 491V493M476.5 491V493M477.5 490V493M478.5 491V494M479.5 491V493M480.5 491V494M481.5 491V493M482.5 492V493M483.5 491V493M484.5 491V493M485.5 491V493M486.5 491V493M487.5 490V493M488.5 491V495M489.5 491V494M490.5 490V493M491.5 490V495M492.5 491V493M493.5 491V493M494.5 491V493M495.5 491V493M496.5 490V493M497.5 491V494M498.5 491V494M499.5 491V494M500.5 491V493M501.5 490V493M502.5 491V493M503.5 491V493M504.5 489V493M505.5 491V496M506.5 491V493M507.5 490V495M508.5 490V494M509.5 491V493M510.5 491V493M511.5 490V493M512.5 491V494M513.5 491V493M514.5 491V493M515.5 490V493M516.5 491V493M517.5 491V493M518.5 491V493M519.5 490V493M520.5 491V494M521.5 490V493M522.5 490V493M523.5 491V493M524.5 489V493M525.5 491V493M526.5 491V493M527.5 491V493M528.5 490V494M529.5 491V493M530.5 491V493M531.5 489V493M532.5 491V493M533.5 491V493M534.5 490V495M535.5 491V493M536.5 491V494M537.5 490V495M538.5 491V493M539.5 490V493M540.5 490V494M541.5 491V493M542.5 491V493M543.5 491V494M544.5 491V493M545.5 491V494M546.5 490V493M547.5 491V493M548.5 490V493M549.5 490V493M550.5 491V493M551.5 491V493M552.5 491V493M553.5 491V493M554.5 491V494M555.5 491V494M556.5 490V493M557.5 491V493M558.5 489V493M559.5 490V494M560.5 491V494M561.5 489V493M562.5 491V496M563.5 490V493M564.5 491V493M565.5 490V493M566.5 491V493M567.5 491V493M568.5 491V493M569.5 489V493M570.5 491V493M571.5 491V495M572.5 491V493M573.5 491V493M574.5 491V494M575.5 491V493M576.5 491V493M577.5 491V494M578.5 491V493M579.5 489V494M580.5 491V493M581.5 491V493M582.5 491V493M583.5 490V493M584.5 491V494M585.5 490V493M586.5 491V494M587.5 491V494M588.5 491V493M589.5 490V494M590.5 491V493M591.5 491V493M592.5 492V493M593.5 491V493M594.5 491V493M595.5 491V493M596.5 491V493M597.5 491V493M598.5 491V493M599.5 491V493M600.5 491V493M601.5 491V493M602.5 491V493M603.5 490V493M604.5 491V493M605.5 490V494M606.5 491V496M607.5 491V494M608.5 489V494M609.5 491V493M610.5 490V494M611.5 491V493M612.5 491V494M613.5 490V494M614.5 490V494M615.5 491V493M616.5 490V494M617.5 489V494M618.5 491V493M619.5 491V493M620.5 491V495M621.5 491V493M622.5 491V493M623.5 491V493M624.5 490V494M625.5 491V493M626.5 491V493M627.5 491V495M628.5 491V493M629.5 490V494M630.5 491V493M631.5 491V493M632.5 491V494M633.5 490V493M634.5 490V493M635.5 491V493M636.5 491V495M637.5 491V494M638.5 491V494M639.5 491V493M640.5 491V494M641.5 489V493M642.5 490V493M643.5 491V493M644.5 491V493M645.5 489V493M646.5 491V493M647.5 490V493M648.5 490V493M649.5 491V494M650.5 491V493M651.5 492V494M652.5 489V493M653.5 491V493M654.5 491V494M655.5 491V493M656.5 491V493M657.5 491V494M658.5 491V493M659.5 490V493M660.5 491V494M661.5 491V493M662.5 490V493M663.5 489V493M664.5 491V493M665.5 492V493M666.5 491V495M667.5 490V493M668.5 492V493M669.5 491V493M670.5 492V493M671.5 490V494M672.5 490V493M673.5 491V494M674.5 491V493M675.5 491V494M676.5 490V494M677.5 490V493M678.5 490V493M679.5 491V493M680.5 491V493M681.5 491V493M682.5 492V493M683.5 490V493M684.5 491V493M685.5 491V493M686.5 491V494M687.5 492V493M688.5 491V494M689.5 491V493M690.5 491V493M691.5 491V494M692.5 491V493M693.5 491V493M694.5 491V494M695.5 491V493M696.5 491V493M697.5 491V494M698.5 491V493M699.5 490V494M700.5 490V493M701.5 491V493M702.5 491V493M703.5 491V494M704.5 491V494M705.5 491V493M706.5 491V493M707.5 489V493M708.5 491V493M709.5 491V494M710.5 491V496M711.5 491V495M712.5 491V493M713.5 490V493M714.5 490V494M715.5 490V493M716.5 491V493M717.5 489V493M718.5 491V493M719.5 491V493M720.5 490V494M721.5 491V494M722.5 491V493M723.5 490V493M724.5 489V493M725.5 492V493M726.5 490V493M727.5 490V493M728.5 491V493M729.5 491V493M730.5 491V493M731.5 491V493M732.5 491V493M733.5 491V493M734.5 491V493M735.5 491V493M736.5 491V493M737.5 491V493M738.5 490V493M739.5 491V493M740.5 491V493M741.5 489V493M742.5 490V494M743.5 491V493M744.5 491V494M745.5 491V493M746.5 490V493M747.5 491V494M748.5 490V493M749.5 491V493M750.5 491V493M751.5 491V494M752.5 491V493M753.5 491V494M754.5 491V494M755.5 491V493M756.5 490V495M757.5 489V493M758.5 490V493M759.5 491V493M760.5 491V493M761.5 490V494M762.5 491V493M763.5 491V493M764.5 491V493M765.5 490V493M766.5 491V493M767.5 490V493M768.5 491V493M769.5 490V493M770.5 491V494M771.5 491V494M772.5 491V494M773.5 490V493M774.5 492V493M775.5 491V493M776.5 490V493M777.5 491V493M778.5 490V494M779.5 489V493M780.5 490V494M781.5 490V493M782.5 491V493M783.5 491V493M784.5 491V494M785.5 489V493M786.5 491V495M787.5 491V494M788.5 491V493M789.5 491V493M790.5 490V493M791.5 489V495M792.5 491V494M793.5 489V493M794.5 490V495M795.5 491V494M796.5 491V493M797.5 490V493M798.5 491V493M799.5 491V493M800.5 490V493M801.5 491V493M802.5 491V493M803.5 491V493M804.5 491V493M805.5 491V493M806.5 490V493M807.5 490V493M808.5 490V493M809.5 491V493M810.5 491V494M811.5 491V494M812.5 491V493M813.5 490V493M814.5 491V493M815.5 491V494M816.5 490V494M817.5 491V493M818.5 491V495M819.5 491V494M820.5 491V493M821.5 491V493M822.5 490V494M823.5 492V494M824.5 492V493M825.5 491V495M826.5 491V494M827.5 491V494M828.5 490V494M829.5 491V493M830.5 491V494M831.5 491V493M832.5 490V493M833.5 490V493M834.5 491V493M835.5 490V493M836.5 491V494M837.5 490V493M838.5 490V493M839.5 489V493M840.5 490V494M841.5 491V493M842.5 491V494M843.5 490V493M844.5 490V493M845.5 491V493M846.5 492V493M847.5 491V494M848.5 491V493M849.5 490V493M850.5 491V493M851.5 491V493M852.5 491V493M853.5 491V493M854.5 491V494M855.5 491V494M856.5 491V494M857.5 490V494M858.5 491V493M859.5 491V493M860.5 491V493M861.5 490V493M862.5 490V493M863.5 491V495M864.5 490V494M865.5 489V493M866.5 491V493M867.5 489V493M868.5 490V493M869.5 491V493M870.5 491V493M871.5 490V493M872.5 491V494M873.5 491V493M874.5 491V493M875.5 490V493M876.5 490V494M877.5 490V493M878.5 490V493M879.5 491V493M880.5 490V493M881.5 489V493M882.5 491V494M883.5 490V496M884.5 491V493M885.5 491V493M886.5 490V496M887.5 491V494M888.5 490V494M889.5 491V493M890.5 491V493M891.5 489V493M892.5 491V494M893.5 491V493M894.5 491V493M895.5 490V493M896.5 490V493M897.5 491V494M898.5 491V493M899.5 491V495M900.5 490V493M901.5 491V494M902.5 491V494M903.5 490V493M904.5 491V494M905.5 491V493M906.5 491V493M907.5 490V493M908.5 491V494M909.5 491V494M910.5 491V493M911.5 491V493M912.5 490V494M913.5 491V493M914.5 491V495M915.5 491V494M916.5 491V493M917.5 491V493M918.5 491V493M919.5 491V493M920.5 491V493M921.5 491V495M922.5 491V493M923.5 491V493M924.5 490V494M925.5 491V493M926.5 491V493M927.5 490V494M928.5 490V493M929.5 490V494M930.5 491V493M931.5 490V493M932.5 491V493M933.5 491V493M934.5 491V493M933.5 489V493M934.5 488V493" stroke="#800080"/>
<path d="M335.5 2V622" stroke="#0000ff"/>
<path d="M614.5 2V622" stroke="#ff0000"/>
</g>
<text x="85.5" y="19" fill="#ff6600" text-anchor="end">1</text>
<text x="85.5" y="173" fill="#993366" text-anchor="end">1</text>
<text x="86" y="327" fill="#008000" text-anchor="end">Fault</text>
<text x="86" y="482.5" fill="#800080" text-anchor="end">15</text>
<text x="86" y="518.5" fill="#800080" text-anchor="end">10</text>
<text x="86" y="554.5" fill="#800080" text-anchor="end">5</text>
<text x="86" y="591.5" fill="#800080" text-anchor="end">0</text>
<text transform="translate(17 12) rotate(-90)" text-anchor="end" fill="#ff6600">LEFT_APINF1</text>
<text transform="translate(17 166) rotate(-90)" text-anchor="end" fill="#993366">LEFT_APINF3</text>
<text transform="translate(17 320) rotate(-90)" text-anchor="end" fill="#008000">LF_EEL_Load1</text>
<text transform="translate(17 474) rotate(-90)" text-anchor="end" fill="#800080">AIN</text>
<text x="143" y="646" fill="#000" text-anchor="middle">311.6</text>
<text x="202" y="646" fill="#000" text-anchor="middle">311.8</text>
<text x="261" y="646" fill="#000" text-anchor="middle">312</text>
<text x="320" y="646" fill="#000" text-anchor="middle">312.2</text>
<text x="379" y="646" fill="#000" text-anchor="middle">312.4</text>
<text x="438" y="646" fill="#000" text-anchor="middle">312.6</text>
<text x="498" y="646" fill="#000" text-anchor="middle">312.8</text>
<text x="557" y="646" fill="#000" text-anchor="middle">313</text>
<text x="616" y="646" fill="#000" text-anchor="middle">313.2</text>
<text x="675" y="646" fill="#000" text-anchor="middle">313.4</text>
<text x="734" y="646" fill="#000" text-anchor="middle">313.6</text>
<text x="793" y="646" fill="#000" text-anchor="middle">313.8</text>
<text x="852" y="646" fill="#000" text-anchor="middle">314</text>
<text x="911" y="646" fill="#000" text-anchor="middle">314.2</text>
<text x="935" y="662" fill="#000" text-anchor="end">[s]</text>
</svg>
<div class="mbar"><div class="t g" style="left:5px;top:3px;height:12px;overflow:hidden">Marker Bar</div></div>
<div class="win"></div>
</body></html>
